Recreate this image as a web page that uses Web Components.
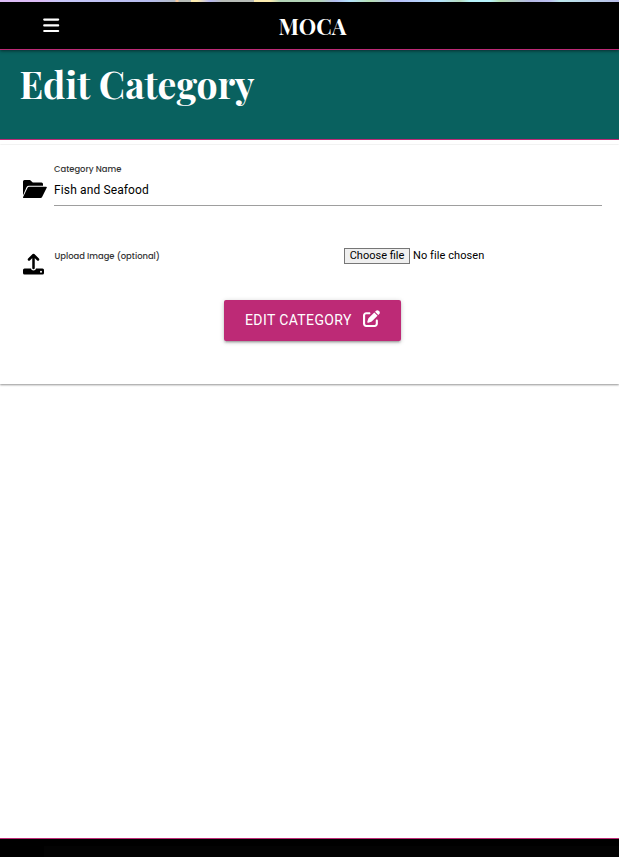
<!DOCTYPE html>
<html lang="en"><head><meta charset="utf-8"><title>Edit Category</title>
<style>html,body{margin:0;height:100%;background:#fff;overflow:hidden}</style></head>
<body><moca-page></moca-page>
<script>
const define=(name,html)=>customElements.define(name,class extends HTMLElement{
  constructor(){super();const t=document.createElement('template');t.innerHTML=html;
    this.attachShadow({mode:'open'}).append(t.content.cloneNode(true));}
});
define('moca-header',`<style>
:host{display:block;height:50px;box-sizing:border-box;background:#000;border-bottom:1px solid #bd2a76;position:relative;z-index:1;box-shadow:0 1px 3px rgba(0,0,0,.5)}
.strip{height:2px;background:linear-gradient(90deg,#dcbcf6 0 40px,#c8c8fa 60px,#b6bcee 150px,#b4bcc4 175px,#f4c8a0 176px 178px,#b8bcb8 179px 191px,#fcecb0 191px 197px,#b8b8f0 210px,#b8bcb8 222px 254px,#fcecb0 254px 270px,#b4d4b8 280px 320px,#b4bcf0 335px,#b4e4fc 350px,#b8e0b4 370px,#b8bcfa 395px,#b4e4fc 440px,#b8dcc0 460px,#b8f4fc 470px 490px,#b8e0b4 500px,#b4b8e4 530px,#bcc0f0 550px,#bce8ec 560px,#b8bce8)}
.bar{display:grid;grid-template-columns:1fr auto 1fr;height:47px}
svg{margin:16px 0 0 43px;width:17px;height:15px}
b{font:700 22px/49px "Playfair Display","Liberation Serif",serif;color:#fff;margin-left:6px;height:47px}
</style><div class="strip"></div><div class="bar"><svg viewBox="0 0 17 15"><path d="M1.2 1.6h14M1.2 7.4h14M1.2 13h14" stroke="#fff" stroke-width="2.1" stroke-linecap="round"/></svg><b><slot></slot></b><span></span></div>`);
define('page-title',`<style>
:host{display:block;height:90px;box-sizing:border-box;background:#09615f;border-bottom:1px solid #bd2a76;padding:8px 0 0 19.500px}
h1{margin:0;font:700 37.4px/52px "Playfair Display","Liberation Serif",serif;color:#fff;white-space:nowrap}
</style><h1><slot></slot></h1>`);
define('form-row',`<style>
:host{display:flex;color:#333;font:500 8.4px/14px Poppins,Inter,sans-serif}
.icon{width:32px;flex:none}.body{flex:1;min-width:0}
</style><div class="icon"><slot name="icon"></slot></div><div class="body"><slot></slot></div>`);
define('text-field',`<style>
:host{display:block;width:548px;border-bottom:1px solid #9e9e9e}
label{display:block}
div{font:400 12px/16px Roboto,sans-serif;color:#000;padding:6px 0 7px;letter-spacing:.13px}
</style><label><slot></slot></label><div><slot name="value"></slot></div>`);
define('file-field',`<style>
:host{display:grid;grid-template-columns:290px auto;justify-content:start}
label{padding:1px 0 0 .5px}
.pick{display:flex;align-items:center;font:400 11px/14px Roboto,sans-serif;color:#000;height:16px;gap:3px}
.choose{box-sizing:border-box;width:66px;height:16px;border:1px solid #767676;background:#efefef;text-align:center;line-height:13px}
.none{line-height:14px;letter-spacing:.08px}
</style><label><slot></slot></label><div class="pick"><span class="choose">Choose file</span><span class="none">No file chosen</span></div>`);
define('submit-button',`<style>
:host{display:flex;box-sizing:border-box;width:177px;height:41px;padding:0 21px;align-items:center;justify-content:space-between;background:#bd2a76;border-radius:2px;color:#fff;font:400 14px/41px Roboto,sans-serif;letter-spacing:.38px;white-space:nowrap;box-shadow:0 2px 2px rgba(0,0,0,.14),0 3px 1px -2px rgba(0,0,0,.12),0 1px 5px rgba(0,0,0,.2)}
svg{width:17px;height:17px;margin-top:-4px}
</style><slot></slot><svg viewBox="0 0 512 512" fill="#fff"><path d="M471.6 21.7c-21.900-21.900-57.300-21.900-79.200 0L362.300 51.700l97.900 97.900 30.100-30.100c21.900-21.900 21.900-57.300 0-79.200L471.600 21.700zm-299.200 220c-6.100 6.100-10.800 13.600-13.500 21.900l-29.600 88.800c-2.900 8.600-.6 18.100 5.800 24.600s15.900 8.700 24.600 5.800l88.800-29.600c8.200-2.700 15.700-7.400 21.900-13.500L437.700 172.300 339.700 74.300 172.400 241.700zM96 64C43 64 0 107 0 160V416c0 53 43 96 96 96H352c53 0 96-43 96-96V320c0-17.700-14.300-32-32-32s-32 14.300-32 32v96c0 17.700-14.300 32-32 32H96c-17.700 0-32-14.300-32-32V160c0-17.700 14.300-32 32-32h96c17.700 0 32-14.300 32-32s-14.300-32-32-32H96z"/></svg>`);
define('category-form',`<style>
:host{display:block;box-sizing:border-box;height:239px;margin-top:5px;padding:17px 17px 0 22px;box-shadow:0 1px 2px rgba(0,0,0,.4),0 0 2px rgba(0,0,0,.08);clip-path:inset(-1px 0 -6px);background:#fff}
.upload{margin-top:42px}submit-button{margin:25px auto 0 202px}
.folder{width:25px;height:20px;margin:17px 0 0 0;display:block}.up{width:22px;height:22px;margin-top:5px;display:block}
</style>
<form-row><svg class="folder" slot="icon" viewBox="0 0 25 20"><path d="M1 16.500V2.500Q1 1 2.500 1H8l2.800 2.500h8.700Q21 3.500 21 5v1.700H7Q5.400 6.700 4.600 8z"/><path d="M5.700 8.500Q6.100 7.700 7 7.700h17q1.300 0 .7 1.100l-4.600 9.300q-.5.9-1.500.9H2q-1.400 0-.8-1.200z"/></svg><text-field>Category Name<span slot="value">Fish and Seafood</span></text-field></form-row>
<form-row class="upload"><svg class="up" slot="icon" viewBox="0 0 22 22"><path d="M11.500 15V2.500M7 6.500l4.500-4.500L16 6.500" fill="none" stroke="#000" stroke-width="2.500" stroke-linecap="round" stroke-linejoin="round"/><path fill-rule="evenodd" d="M2.500 15.500H9q.3 2 2.500 2t2.500-2h6.500Q22 15.500 22 17v3q0 1.500-1.500 1.500h-18Q1 21.500 1 20v-3q0-1.500 1.500-1.500zM19 17.700a1 1 0 1 0 0 2 1 1 0 0 0 0-2z"/></svg><file-field>Upload Image (optional)</file-field></form-row>
<submit-button>EDIT CATEGORY</submit-button>`);
define('page-footer',`<style>:host{display:block;height:19px;box-sizing:border-box;border-top:1px solid #bd2a76;background:#000;margin-top:auto;flex:none;overflow:hidden}div{margin:7px 0 0 44px;height:11px;background:#030303}</style><div></div>`);
define('moca-page',`<style>:host{display:flex;flex-direction:column;height:857px}</style>
<moca-header>MOCA</moca-header><page-title>Edit Category</page-title><category-form></category-form><page-footer></page-footer>`);
</script></body></html>
